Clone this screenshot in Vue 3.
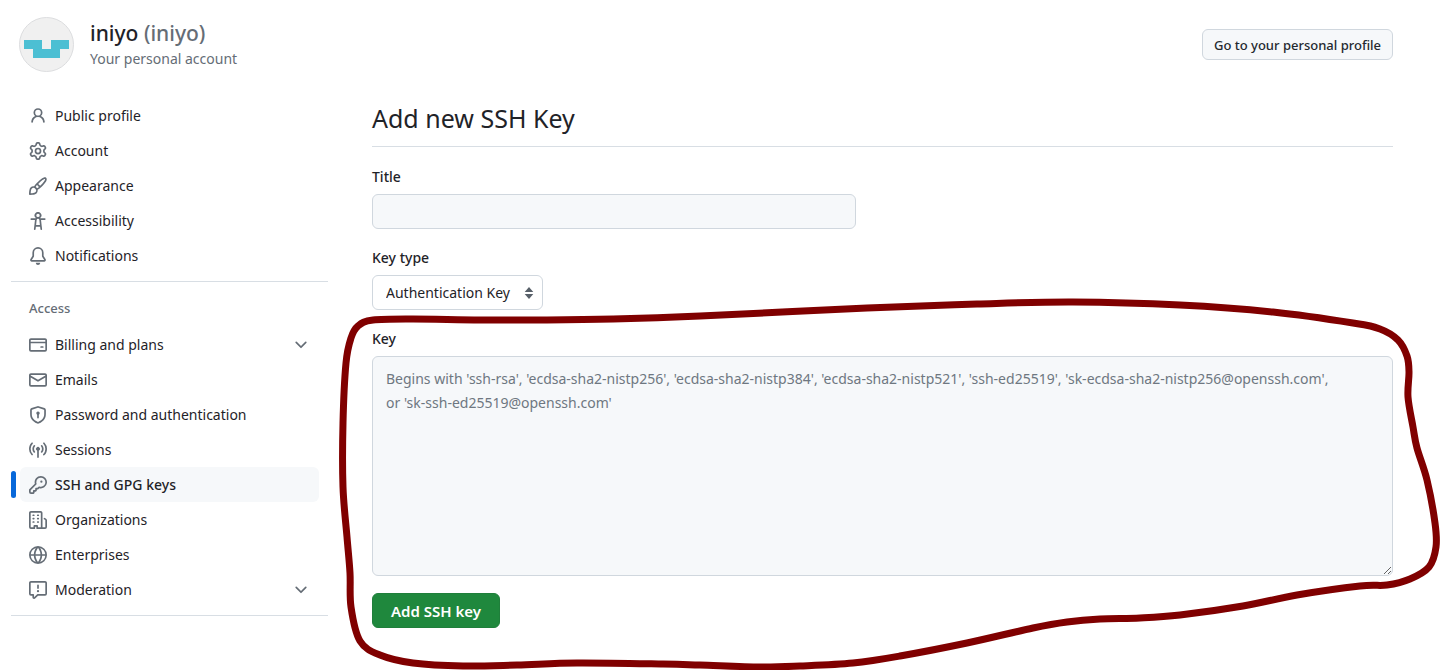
<template>
  <div class="page">
    <header class="profile">
      <svg class="avatar" viewBox="0 0 55 55" aria-hidden="true">
        <circle cx="27.5" cy="27.5" r="27" fill="#f0f0f0" stroke="#dcdddf" />
        <path d="M5 23h18v9h9v-9h18v9h-9v9H14v-9H5z" fill="#4cbfd3" />
      </svg>
      <div class="profile-text">
        <h1 class="profile-name"><a href="#">iniyo <span class="profile-login">(iniyo)</span></a></h1>
        <p class="profile-note">Your personal account</p>
      </div>
      <button type="button" class="btn">Go to your personal profile</button>
    </header>

    <div class="layout">
      <nav class="sidebar" aria-label="Settings">
        <section v-for="(group, g) in groups" :key="g" class="nav-group">
          <h2 v-if="group.title" class="nav-title">{{ group.title }}</h2>
          <ul class="nav-list">
            <li v-for="item in group.items" :key="item.label" class="nav-item" :class="{ 'nav-item--active': item.label === active }">
              <a href="#" class="nav-link" @click.prevent="active = item.label">
                <svg class="icon" viewBox="0 0 16 16" aria-hidden="true"><path :d="icons[item.icon]" /></svg>
                <span class="nav-label">{{ item.label }}</span>
                <svg v-if="item.expandable" class="icon" viewBox="0 0 16 16" aria-hidden="true"><path :d="icons.chevron" /></svg>
              </a>
            </li>
          </ul>
        </section>
      </nav>

      <main class="content">
        <h2 class="heading">Add new SSH Key</h2>
        <form @submit.prevent>
          <div class="field">
            <label for="key-title">Title</label>
            <input id="key-title" v-model="title" type="text" class="control control--title" />
          </div>
          <div class="field">
            <label for="key-type">Key type</label>
            <div class="select-wrap">
              <select id="key-type" v-model="keyType" class="control control--select">
                <option>Authentication Key</option>
                <option>Signing Key</option>
              </select>
              <svg class="select-arrows" viewBox="0 0 10 14" aria-hidden="true"><path d="M5 1 9.3 6H.7zM5 13 .7 8h8.6z" /></svg>
            </div>
          </div>
          <div class="field">
            <label for="key-body">Key</label>
            <textarea id="key-body" v-model="key" class="control control--key" :placeholder="placeholder"></textarea>
          </div>
          <button type="submit" class="btn btn--primary">Add SSH key</button>
        </form>
      </main>
    </div>

    <svg class="marker" viewBox="0 0 1443 670" preserveAspectRatio="none" aria-hidden="true">
      <path :d="markerPath" />
    </svg>
  </div>
</template>

<script setup>
import { ref } from 'vue';

const active = ref('SSH and GPG keys');
const title = ref('');
const keyType = ref('Authentication Key');
const key = ref('');

const placeholder = "Begins with 'ssh-rsa', 'ecdsa-sha2-nistp256', 'ecdsa-sha2-nistp384', 'ecdsa-sha2-nistp521', 'ssh-ed25519', 'sk-ecdsa-sha2-nistp256@openssh.com',\nor 'sk-ssh-ed25519@openssh.com'";

const groups = [
  {
    items: [
      { label: 'Public profile', icon: 'person' },
      { label: 'Account', icon: 'gear' },
      { label: 'Appearance', icon: 'brush' },
      { label: 'Accessibility', icon: 'accessibility' },
      { label: 'Notifications', icon: 'bell' },
    ],
  },
  {
    title: 'Access',
    items: [
      { label: 'Billing and plans', icon: 'card', expandable: true },
      { label: 'Emails', icon: 'mail' },
      { label: 'Password and authentication', icon: 'shield' },
      { label: 'Sessions', icon: 'broadcast' },
      { label: 'SSH and GPG keys', icon: 'key' },
      { label: 'Organizations', icon: 'organization' },
      { label: 'Enterprises', icon: 'globe' },
      { label: 'Moderation', icon: 'report', expandable: true },
    ],
  },
];

const icons = {
  person: 'M10.561 8.073a6.005 6.005 0 0 1 3.432 5.142.75.75 0 1 1-1.498.07 4.5 4.5 0 0 0-8.99 0 .75.75 0 0 1-1.498-.07 6.004 6.004 0 0 1 3.431-5.142 3.999 3.999 0 1 1 5.123 0ZM10.5 5a2.5 2.5 0 1 0-5 0 2.5 2.5 0 0 0 5 0Z',
  gear: 'M8 0a8.2 8.2 0 0 1 .701.031C9.444.095 9.99.645 10.16 1.29l.288 1.107c.018.066.079.158.212.224.231.114.454.243.668.386.123.082.233.09.299.071l1.103-.303c.644-.176 1.392.021 1.82.63.27.385.506.792.704 1.218.315.675.111 1.422-.364 1.891l-.814.806c-.049.048-.098.147-.088.294.016.257.016.515 0 .772-.01.147.038.246.088.294l.814.806c.475.469.679 1.216.364 1.891a7.977 7.977 0 0 1-.704 1.217c-.428.61-1.176.807-1.82.63l-1.102-.302c-.067-.019-.177-.011-.3.071a5.909 5.909 0 0 1-.668.386c-.133.066-.194.158-.211.224l-.29 1.106c-.168.646-.715 1.196-1.458 1.26a8.006 8.006 0 0 1-1.402 0c-.743-.064-1.289-.614-1.458-1.26l-.289-1.106c-.018-.066-.079-.158-.212-.224a5.738 5.738 0 0 1-.668-.386c-.123-.082-.233-.09-.299-.071l-1.103.303c-.644.176-1.392-.021-1.82-.63a8.12 8.12 0 0 1-.704-1.218c-.315-.675-.111-1.422.363-1.891l.815-.806c.05-.048.098-.147.088-.294a6.214 6.214 0 0 1 0-.772c.01-.147-.038-.246-.088-.294l-.815-.806C.635 6.045.431 5.298.746 4.623a7.92 7.92 0 0 1 .704-1.217c.428-.61 1.176-.807 1.82-.63l1.102.302c.067.019.177.011.3-.071.214-.143.437-.272.668-.386.133-.066.194-.158.211-.224l.29-1.106C6.009.645 6.556.095 7.299.03 7.53.01 7.764 0 8 0Zm-.571 1.525c-.036.003-.108.036-.137.146l-.289 1.105c-.147.561-.549.967-.998 1.189-.173.086-.34.183-.5.29-.417.278-.97.423-1.529.27l-1.103-.303c-.109-.03-.175.016-.195.045-.22.312-.412.644-.573.99-.014.031-.021.11.059.19l.815.806c.411.406.562.957.53 1.456a4.709 4.709 0 0 0 0 .582c.032.499-.119 1.05-.53 1.456l-.815.806c-.081.08-.073.159-.059.19.162.346.353.677.573.989.02.03.085.076.195.046l1.102-.303c.56-.153 1.113-.008 1.53.27.161.107.328.204.501.29.447.222.85.629.997 1.189l.289 1.105c.029.109.101.143.137.146a6.6 6.6 0 0 0 1.142 0c.036-.003.108-.036.137-.146l.289-1.105c.147-.561.549-.967.998-1.189.173-.086.34-.183.5-.29.417-.278.97-.423 1.529-.27l1.103.303c.109.029.175-.016.195-.045.22-.313.411-.644.573-.99.014-.031.021-.11-.059-.19l-.815-.806c-.411-.406-.562-.957-.53-1.456a4.709 4.709 0 0 0 0-.582c-.032-.499.119-1.05.53-1.456l.815-.806c.081-.08.073-.159.059-.19a6.464 6.464 0 0 0-.573-.989c-.02-.03-.085-.076-.195-.046l-1.102.303c-.56.153-1.113.008-1.53-.27a4.44 4.44 0 0 0-.501-.29c-.447-.222-.85-.629-.997-1.189l-.289-1.105c-.029-.11-.101-.143-.137-.146a6.6 6.6 0 0 0-1.142 0ZM11 8a3 3 0 1 1-6 0 3 3 0 0 1 6 0ZM9.5 8a1.5 1.5 0 1 0-3.001.001A1.5 1.5 0 0 0 9.5 8Z',
  brush: 'M11.134 1.535c.7-.509 1.416-.942 2.076-1.155.649-.21 1.463-.267 2.069.34.603.601.568 1.411.368 2.07-.202.668-.624 1.39-1.125 2.096-1.011 1.424-2.496 2.987-3.775 4.249-1.098 1.084-2.132 1.839-3.04 2.3a3.744 3.744 0 0 1-1.055 3.217c-.431.431-1.065.691-1.657.861-.614.177-1.294.287-1.914.357A21.151 21.151 0 0 1 .797 16H.743l.007-.75H.749L.742 16a.75.75 0 0 1-.743-.742l.743-.008-.742.007v-.054a21.25 21.25 0 0 1 .13-2.284c.067-.647.187-1.287.358-1.914.17-.591.43-1.226.86-1.657a3.746 3.746 0 0 1 3.227-1.054c.466-.893 1.225-1.907 2.314-2.982 1.271-1.255 2.833-2.75 4.245-3.777ZM1.62 13.089c-.051.464-.086.929-.104 1.395.466-.018.932-.053 1.396-.104a10.511 10.511 0 0 0 1.668-.309c.526-.151.856-.325 1.011-.48a2.25 2.25 0 1 0-3.182-3.182c-.155.155-.329.485-.48 1.01a10.515 10.515 0 0 0-.309 1.67Zm10.396-10.34c-1.224.89-2.605 2.189-3.822 3.384l1.718 1.718c1.21-1.205 2.51-2.597 3.387-3.833.47-.662.78-1.227.912-1.662.134-.444.032-.551.009-.575h-.001V1.78c-.014-.014-.113-.113-.548.027-.432.14-.995.462-1.655.942Zm-4.832 7.266-.001.001a9.859 9.859 0 0 0 1.63-1.142L7.155 7.216a9.7 9.7 0 0 0-1.161 1.607c.482.302.889.71 1.19 1.192Z',
  accessibility: 'M9.923 5.302c.063.063.122.129.178.198H14a.75.75 0 0 1 0 1.5h-3.3l.578 5.163.362 2.997a.75.75 0 0 1-1.49.18L9.868 13H6.132l-.282 2.34a.75.75 0 0 1-1.49-.18l.362-2.997L5.3 7H2a.75.75 0 0 1 0-1.5h3.9a2.54 2.54 0 0 1 .176-.198 3 3 0 1 1 3.847 0ZM9.2 7.073h-.001a1.206 1.206 0 0 0-2.398 0L6.305 11.5h3.39ZM9.5 3a1.5 1.5 0 1 0-3.001.001A1.5 1.5 0 0 0 9.5 3Z',
  bell: 'M8 16a2 2 0 0 0 1.985-1.75c.017-.137-.097-.25-.235-.25h-3.5c-.138 0-.252.113-.235.25A2 2 0 0 0 8 16ZM3 5a5 5 0 0 1 10 0v2.947c0 .05.015.098.042.139l1.703 2.555A1.519 1.519 0 0 1 13.482 13H2.518a1.516 1.516 0 0 1-1.263-2.36l1.703-2.554A.255.255 0 0 0 3 7.947Zm5-3.5A3.5 3.5 0 0 0 4.5 5v2.947c0 .346-.102.683-.294.97l-1.703 2.556a.017.017 0 0 0-.003.01l.001.006c0 .002.002.004.004.006l.006.004.007.001h10.964l.007-.001.006-.004.004-.006.001-.007a.017.017 0 0 0-.003-.01l-1.703-2.554a1.745 1.745 0 0 1-.294-.97V5A3.5 3.5 0 0 0 8 1.5Z',
  card: 'M10.75 9a.75.75 0 0 0 0 1.5h1.5a.75.75 0 0 0 0-1.5h-1.5ZM0 3.75C0 2.784.784 2 1.75 2h12.5c.966 0 1.75.784 1.75 1.75v8.5A1.75 1.75 0 0 1 14.25 14H1.75A1.75 1.75 0 0 1 0 12.25ZM14.5 6.5h-13v5.75c0 .138.112.25.25.25h12.5a.25.25 0 0 0 .25-.25Zm0-2.75a.25.25 0 0 0-.25-.25H1.75a.25.25 0 0 0-.25.25V5h13Z',
  mail: 'M1.75 2h12.5c.966 0 1.75.784 1.75 1.75v8.5A1.75 1.75 0 0 1 14.25 14H1.75A1.75 1.75 0 0 1 0 12.25v-8.5C0 2.784.784 2 1.75 2ZM1.5 12.251c0 .138.112.25.25.25h12.5a.25.25 0 0 0 .25-.25V5.809L8.38 9.397a.75.75 0 0 1-.76 0L1.5 5.809v6.442Zm13-8.181v-.32a.25.25 0 0 0-.25-.25H1.75a.25.25 0 0 0-.25.25v.32L8 7.88Z',
  shield: 'm8.533.133 5.25 1.68A1.75 1.75 0 0 1 15 3.48V7c0 1.566-.32 3.182-1.303 4.682-.983 1.498-2.585 2.813-5.032 3.855a1.697 1.697 0 0 1-1.33 0c-2.447-1.042-4.049-2.357-5.032-3.855C1.32 10.182 1 8.566 1 7V3.48a1.755 1.755 0 0 1 1.217-1.667l5.25-1.68a1.748 1.748 0 0 1 1.066 0Zm-.61 1.429.001.001-5.25 1.68a.251.251 0 0 0-.174.237V7c0 1.36.275 2.666 1.057 3.859.784 1.194 2.121 2.342 4.366 3.298a.196.196 0 0 0 .154 0c2.245-.957 3.582-2.103 4.366-3.297C13.225 9.666 13.5 8.358 13.5 7V3.48a.25.25 0 0 0-.174-.238l-5.25-1.68a.25.25 0 0 0-.153 0ZM9.5 6.5c0 .536-.286 1.032-.75 1.3v2.45a.75.75 0 0 1-1.5 0V7.8A1.5 1.5 0 1 1 9.5 6.5Z',
  broadcast: 'M8.75 8.582v5.668a.75.75 0 0 1-1.5 0V8.582a1.75 1.75 0 1 1 1.5 0Zm3.983-7.125a.75.75 0 0 1 1.06.026A7.976 7.976 0 0 1 16 7c0 2.139-.84 4.083-2.207 5.517a.75.75 0 1 1-1.086-1.034A6.474 6.474 0 0 0 14.5 7a6.474 6.474 0 0 0-1.793-4.483.75.75 0 0 1 .026-1.06Zm-9.466 0c.3.286.312.76.026 1.06A6.474 6.474 0 0 0 1.5 7a6.47 6.47 0 0 0 1.793 4.483.75.75 0 0 1-1.086 1.034A7.973 7.973 0 0 1 0 7c0-2.139.84-4.083 2.207-5.517a.75.75 0 0 1 1.06-.026Zm8.556 2.321A4.988 4.988 0 0 1 13 7a4.988 4.988 0 0 1-1.177 3.222.75.75 0 1 1-1.146-.967A3.487 3.487 0 0 0 11.5 7c0-.86-.309-1.645-.823-2.255a.75.75 0 0 1 1.146-.967Zm-6.492.958A3.48 3.48 0 0 0 4.5 7a3.48 3.48 0 0 0 .823 2.255.75.75 0 0 1-1.146.967A4.981 4.981 0 0 1 3 7a4.982 4.982 0 0 1 1.188-3.236.75.75 0 1 1 1.143.972Z',
  key: 'M10.5 0a5.499 5.499 0 1 1-1.288 10.848l-.932.932a.749.749 0 0 1-.53.22H7v.75a.749.749 0 0 1-.22.53l-.5.5a.749.749 0 0 1-.53.22H5v.75a.749.749 0 0 1-.22.53l-.5.5a.749.749 0 0 1-.53.22h-2A1.75 1.75 0 0 1 0 14.25v-2c0-.199.079-.389.22-.53l4.932-4.932A5.5 5.5 0 0 1 10.5 0Zm-4 5.5c-.001.431.069.86.205 1.269a.75.75 0 0 1-.181.768L1.5 12.56v1.69c0 .138.112.25.25.25h1.69l.06-.06v-1.19a.75.75 0 0 1 .75-.75h1.19l.06-.06v-1.19a.75.75 0 0 1 .75-.75h1.19l1.023-1.025a.75.75 0 0 1 .768-.18A4 4 0 1 0 6.5 5.5ZM11 6a1 1 0 1 1 0-2 1 1 0 0 1 0 2Z',
  organization: 'M1.75 16A1.75 1.75 0 0 1 0 14.25V1.75C0 .784.784 0 1.75 0h8.5C11.216 0 12 .784 12 1.75v12.5c0 .085-.006.168-.018.25h2.268a.25.25 0 0 0 .25-.25V8.285a.25.25 0 0 0-.111-.208l-1.055-.703a.749.749 0 1 1 .832-1.248l1.055.703c.487.325.779.871.779 1.456v5.965A1.75 1.75 0 0 1 14.25 16h-3.5a.766.766 0 0 1-.197-.026c-.099.017-.2.026-.303.026h-3a.75.75 0 0 1-.75-.75V14h-1v1.25a.75.75 0 0 1-.75.75Zm-.25-1.75c0 .138.112.25.25.25H4v-1.25a.75.75 0 0 1 .75-.75h2.5a.75.75 0 0 1 .75.75v1.25h2.25a.25.25 0 0 0 .25-.25V1.75a.25.25 0 0 0-.25-.25h-8.5a.25.25 0 0 0-.25.25ZM3.75 6h.5a.75.75 0 0 1 0 1.5h-.5a.75.75 0 0 1 0-1.5ZM3 3.75A.75.75 0 0 1 3.75 3h.5a.75.75 0 0 1 0 1.5h-.5A.75.75 0 0 1 3 3.75Zm4 3A.75.75 0 0 1 7.75 6h.5a.75.75 0 0 1 0 1.5h-.5A.75.75 0 0 1 7 6.75ZM7.75 3h.5a.75.75 0 0 1 0 1.5h-.5a.75.75 0 0 1 0-1.5ZM3 9.75A.75.75 0 0 1 3.75 9h.5a.75.75 0 0 1 0 1.5h-.5A.75.75 0 0 1 3 9.75ZM7.75 9h.5a.75.75 0 0 1 0 1.5h-.5a.75.75 0 0 1 0-1.5Z',
  globe: 'M8 0a8 8 0 1 1 0 16A8 8 0 0 1 8 0ZM5.78 8.75a9.64 9.64 0 0 0 1.363 4.177c.255.426.542.832.857 1.215.245-.296.551-.705.857-1.215A9.64 9.64 0 0 0 10.22 8.75Zm4.44-1.5a9.64 9.64 0 0 0-1.363-4.177c-.307-.51-.612-.919-.857-1.215a9.927 9.927 0 0 0-.857 1.215A9.64 9.64 0 0 0 5.78 7.25Zm-5.944 1.5H1.543a6.507 6.507 0 0 0 4.666 5.5c-.123-.181-.24-.365-.352-.552-.715-1.192-1.437-2.874-1.581-4.948Zm-2.733-1.5h2.733c.144-2.074.866-3.756 1.58-4.948.12-.197.237-.381.353-.552a6.507 6.507 0 0 0-4.666 5.5Zm10.181 1.5c-.144 2.074-.866 3.756-1.58 4.948-.12.197-.237.381-.353.552a6.507 6.507 0 0 0 4.666-5.5Zm2.733-1.5a6.507 6.507 0 0 0-4.666-5.5c.123.181.24.365.353.552.714 1.192 1.436 2.874 1.58 4.948Z',
  report: 'M0 1.75C0 .784.784 0 1.75 0h12.5C15.216 0 16 .784 16 1.75v9.5A1.75 1.75 0 0 1 14.25 13H8.06l-2.573 2.573A1.458 1.458 0 0 1 3 14.543V13H1.75A1.75 1.75 0 0 1 0 11.25Zm1.75-.25a.25.25 0 0 0-.25.25v9.5c0 .138.112.25.25.25h2a.75.75 0 0 1 .75.75v2.19l2.72-2.72a.749.749 0 0 1 .53-.22h6.5a.25.25 0 0 0 .25-.25v-9.5a.25.25 0 0 0-.25-.25Zm7 2.25v2.5a.75.75 0 0 1-1.5 0v-2.5a.75.75 0 0 1 1.5 0ZM9 9a1 1 0 1 1-2 0 1 1 0 0 1 2 0Z',
  chevron: 'M12.78 5.22a.749.749 0 0 1 0 1.06l-4.25 4.25a.749.749 0 0 1-1.06 0L3.22 6.28a.749.749 0 1 1 1.06-1.06L8 8.939l3.72-3.719a.749.749 0 0 1 1.06 0Z',
};

// hand-drawn loop around the key form, clockwise from its top left corner
const markerPoints = [
  [373, 320], [413, 319], [480, 320], [547, 320], [613, 319], [700, 316], [867, 308], [977, 304],
  [1073, 302], [1180, 305], [1273, 312], [1353, 323], [1380, 329], [1398, 340], [1407, 356], [1409, 372],
  [1408, 397], [1413, 427], [1417, 448], [1427, 480], [1435, 523], [1436, 547], [1429, 567], [1410, 579],
  [1387, 585], [1360, 586], [1297, 595], [1243, 606], [1180, 615], [1140, 618], [1100, 619], [1067, 622],
  [1033, 628], [967, 643], [900, 656], [853, 663], [800, 666], [760, 667], [700, 665], [663, 664],
  [577, 663], [517, 665], [463, 666], [413, 663], [380, 655], [360, 641], [351, 607], [350, 573],
  [347, 537], [343, 487], [343, 423], [346, 363], [351, 338], [358, 326],
];

function smoothLoop(points) {
  const at = (i) => points[(i + points.length) % points.length];
  let d = `M${at(0)}`;
  for (let i = 0; i < points.length; i++) {
    const [a, b, c, e] = [at(i - 1), at(i), at(i + 1), at(i + 2)];
    d += `C${b[0] + (c[0] - a[0]) / 6},${b[1] + (c[1] - a[1]) / 6} ${c[0] - (e[0] - b[0]) / 6},${c[1] - (e[1] - b[1]) / 6} ${c}`;
  }
  return d + 'Z';
}

const markerPath = smoothLoop(markerPoints);
</script>

<style>
body {
  margin: 0;
  background: #fff;
}
</style>

<style scoped>
.page {
  position: relative;
  box-sizing: border-box;
  min-height: 100vh;
  padding: 17px 50px 0 11px;
  font-family: "Noto Sans", "Open Sans", sans-serif;
  font-size: 14px;
  line-height: 24px;
  color: #1f2328;
}
.page *,
.page *::before {
  box-sizing: border-box;
}
.profile {
  display: flex;
  align-items: center;
  gap: 16px;
  padding-left: 8px;
}
.avatar {
  width: 55px;
  height: 55px;
}
.profile-text {
  flex: 1;
}
.profile-name {
  margin: 0;
  font-size: 21px;
  font-weight: 500;
  line-height: 28px;
}
.profile-name a {
  color: inherit;
  text-decoration: none;
}
.profile-login {
  color: #656d76;
}
.profile-note {
  margin: 0;
  color: #656d76;
}
.btn {
  height: 31px;
  padding: 0 11px;
  border: 1px solid #d0d7de;
  border-radius: 6px;
  background: #f6f8fa;
  color: #24292f;
  font-family: inherit;
  font-size: 13px;
  font-weight: 500;
  cursor: pointer;
}
.btn--primary {
  height: 35px;
  padding: 0 18px;
  border-color: #1f7f3b;
  background: #1f883d;
  color: #fff;
  font-size: 15px;
  font-weight: 600;
}
.layout {
  display: flex;
  gap: 44px;
  padding-top: 26px;
}
.sidebar {
  flex: 0 0 317px;
}
.nav-group {
  padding-bottom: 8px;
  border-bottom: 1px solid #d8dee4;
}
.nav-title {
  margin: 0;
  padding: 14px 18px 7px;
  color: #656d76;
  font-size: 13px;
  font-weight: 500;
  line-height: 24px;
}
.nav-list {
  margin: 0;
  padding: 0 9px;
  list-style: none;
}
.nav-item {
  position: relative;
  border-radius: 6px;
}
.nav-item--active {
  background: #f6f8fa;
  font-weight: 500;
}
.nav-item--active::before {
  content: "";
  position: absolute;
  top: 4px;
  left: -9px;
  width: 5px;
  height: 27px;
  border-radius: 6px;
  background: #0969da;
}
.nav-link {
  display: flex;
  align-items: center;
  gap: 8px;
  height: 35px;
  padding: 0 9px;
  color: inherit;
  text-decoration: none;
}
.nav-label {
  flex: 1;
}
.icon {
  width: 18px;
  height: 18px;
  fill: #656d76;
}
.content {
  flex: 1;
  min-width: 0;
}
.heading {
  margin: 0 0 18px;
  padding-bottom: 8px;
  border-bottom: 1px solid #d8dee4;
  font-size: 25px;
  font-weight: 400;
  line-height: 40px;
}
.field {
  display: flex;
  flex-direction: column;
  align-items: flex-start;
  gap: 5px;
  margin-bottom: 17px;
}
.field label {
  font-size: 14px;
  font-weight: 500;
}
.control {
  height: 35px;
  margin: 0;
  padding: 0 13px;
  border: 1px solid #d0d7de;
  border-radius: 6px;
  background: #f6f8fa;
  color: inherit;
  font: inherit;
}
.control::placeholder {
  color: #6e7781;
}
.control--title {
  width: 100%;
  max-width: 484px;
}
.select-wrap {
  position: relative;
}
.control--select {
  width: 171px;
  padding-right: 27px;
  background: #fff;
  appearance: none;
}
.select-arrows {
  position: absolute;
  top: 11px;
  right: 9px;
  width: 10px;
  height: 14px;
  fill: #586069;
  pointer-events: none;
}
.control--key {
  width: 100%;
  height: 220px;
  padding: 10px 13px;
  resize: vertical;
}
.marker {
  position: absolute;
  top: 0;
  left: 0;
  width: 100%;
  height: 670px;
  pointer-events: none;
}
.marker path {
  fill: none;
  stroke: #800000;
  stroke-width: 7;
  stroke-linejoin: round;
}
</style>
